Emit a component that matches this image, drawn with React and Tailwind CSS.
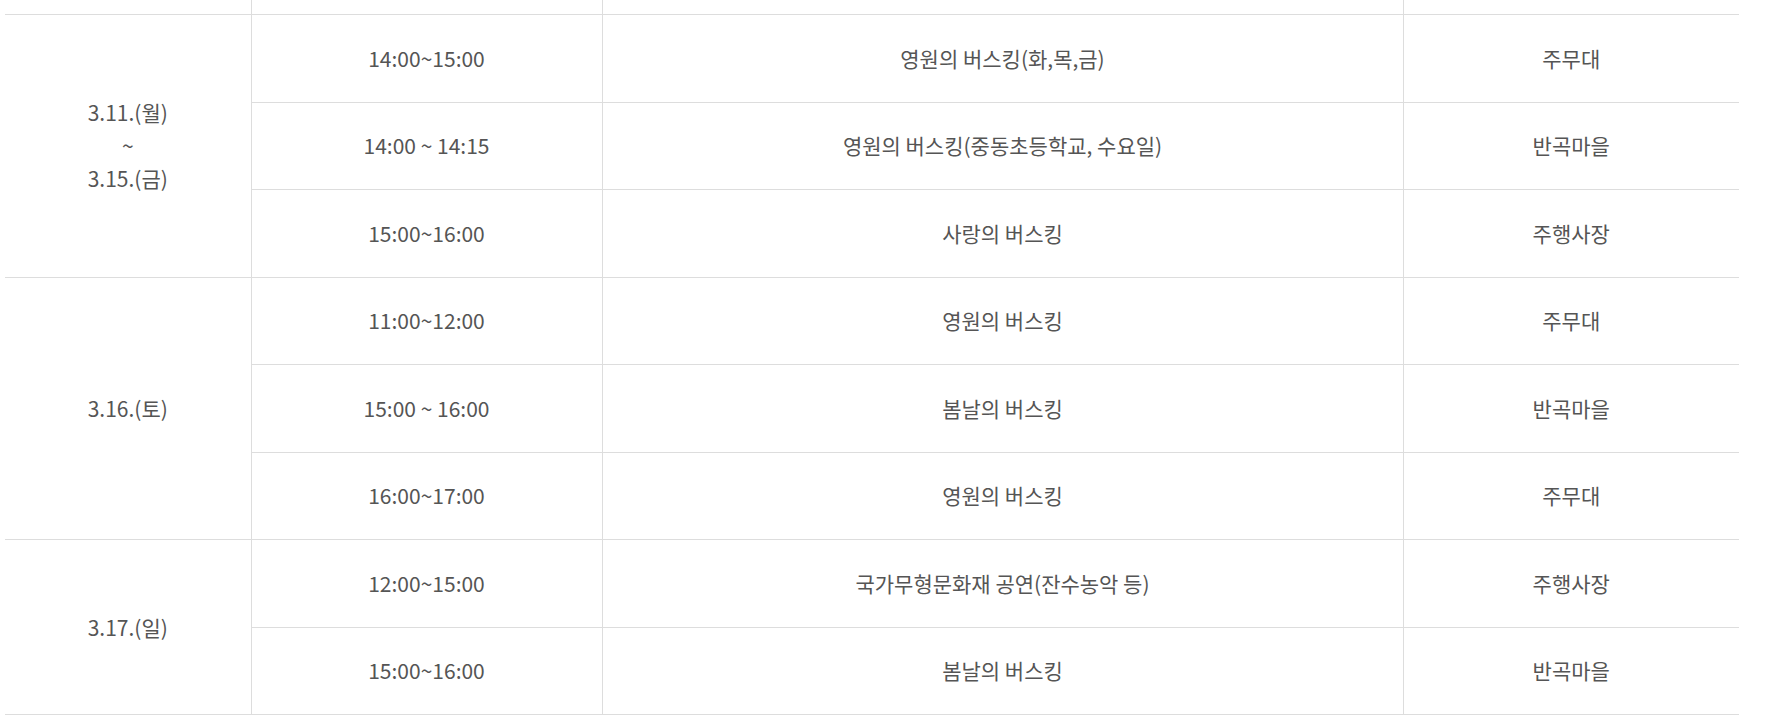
import React from 'react'

const schedule = [
    {
        date: ['3.11.(월)', '~', '3.15.(금)'],
        items: [
            { time: '14:00~15:00', title: '영원의 버스킹(화,목,금)', place: '주무대' },
            { time: '14:00 ~ 14:15', title: '영원의 버스킹(중동초등학교, 수요일)', place: '반곡마을' },
            { time: '15:00~16:00', title: '사랑의 버스킹', place: '주행사장' },
        ],
    },
    {
        date: ['3.16.(토)'],
        items: [
            { time: '11:00~12:00', title: '영원의 버스킹', place: '주무대' },
            { time: '15:00 ~ 16:00', title: '봄날의 버스킹', place: '반곡마을' },
            { time: '16:00~17:00', title: '영원의 버스킹', place: '주무대' },
        ],
    },
    {
        date: ['3.17.(일)'],
        items: [
            { time: '12:00~15:00', title: '국가무형문화재 공연(잔수농악 등)', place: '주행사장' },
            { time: '15:00~16:00', title: '봄날의 버스킹', place: '반곡마을' },
        ],
    },
]

const cell = 'border border-[#dddddd] text-center align-middle'

const App = () => {
    return (
        <div
            className="w-[1770px] h-[717px] bg-white overflow-hidden pl-[5px]"
            style={{ fontFamily: '"Noto Sans CJK KR", "Noto Sans", sans-serif' }}
        >
            <table className="table-fixed border-collapse w-[1734px] text-[21px] text-[#555555]">
                <colgroup>
                    <col className="w-[246px]" />
                    <col className="w-[351px]" />
                    <col className="w-[801px]" />
                    <col className="w-[336px]" />
                </colgroup>
                <tbody>
                    {/* 잘린 윗줄 */}
                    <tr className="h-[14.5px]">
                        <td className="border-b border-r border-[#dddddd]"></td>
                        <td className="border-b border-r border-[#dddddd]"></td>
                        <td className="border-b border-r border-[#dddddd]"></td>
                        <td className="border-b border-[#dddddd]"></td>
                    </tr>

                    {schedule.map((group) =>
                        group.items.map((item, i) => (
                            <tr key={group.date[0] + i} className="h-[87.5px]">
                                {i === 0 && (
                                    <td
                                        rowSpan={group.items.length}
                                        className={`${cell} border-l-0 leading-[33px]`}
                                    >
                                        {group.date.map((line) => (
                                            <div key={line}>{line}</div>
                                        ))}
                                    </td>
                                )}
                                <td className={cell}>{item.time}</td>
                                <td className={cell}>{item.title}</td>
                                <td className={`${cell} border-r-0`}>{item.place}</td>
                            </tr>
                        ))
                    )}
                </tbody>
            </table>
        </div>
    )
}

export default App
